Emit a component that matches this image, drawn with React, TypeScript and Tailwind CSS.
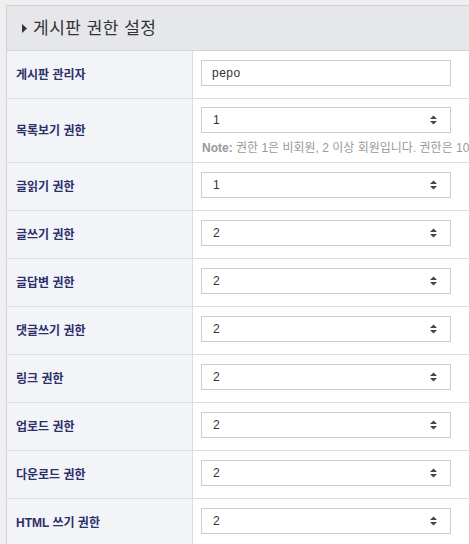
const font = { fontFamily: '"Liberation Sans", "Noto Sans CJK KR", sans-serif' };

type Row = {
  label: string;
  value: string;
  kind: "input" | "select";
  note?: boolean;
};

const rows: Row[] = [
  { label: "게시판 관리자", value: "pepo", kind: "input" },
  { label: "목록보기 권한", value: "1", kind: "select", note: true },
  { label: "글읽기 권한", value: "1", kind: "select" },
  { label: "글쓰기 권한", value: "2", kind: "select" },
  { label: "글답변 권한", value: "2", kind: "select" },
  { label: "댓글쓰기 권한", value: "2", kind: "select" },
  { label: "링크 권한", value: "2", kind: "select" },
  { label: "업로드 권한", value: "2", kind: "select" },
  { label: "다운로드 권한", value: "2", kind: "select" },
  { label: "HTML 쓰기 권한", value: "2", kind: "select" },
];

function UpDown() {
  return (
    <svg width="7" height="10" viewBox="0 0 7 10" className="text-[#444]">
      <path d="M3.5 0.5 L7 4 L0 4 Z" fill="currentColor" />
      <path d="M0 6 L7 6 L3.5 9.5 Z" fill="currentColor" />
    </svg>
  );
}

function Field({ row }: { row: Row }) {
  if (row.kind === "input") {
    return (
      <div className="w-[250px] h-[26px] border border-[#cccccc] bg-white flex items-center pl-[10px] text-[12px] tracking-[0.5px] text-[#333]">
        {row.value}
      </div>
    );
  }
  return (
    <div className="w-[250px] h-[26px] border border-[#cccccc] bg-white flex items-center justify-between pl-[11px] pr-[13px] text-[12px] text-[#333]">
      <span>{row.value}</span>
      <UpDown />
    </div>
  );
}

export default function App() {
  return (
    <div className="w-[469px] h-[544px] overflow-hidden bg-[#efefef] pl-[6px] pt-[5px]" style={font}>
      <div className="w-[800px] border-l border-t border-[#d2d2d2] bg-white">
        <div className="h-[45px] bg-[#e6e7eb] border-b border-[#d6d6d6] flex items-center pl-[15px] gap-[6px]">
          <svg width="5" height="9" viewBox="0 0 5 9">
            <path d="M0 0 L5 4.5 L0 9 Z" fill="#333" />
          </svg>
          <span className="text-[17px] text-[#333] leading-none tracking-[0.5px]">게시판 권한 설정</span>
        </div>
        {rows.map((row) => (
          <div
            key={row.label}
            className={`grid grid-cols-[186px_1fr] border-b border-[#dddddd] ${row.note ? "h-[64px]" : "h-[48px]"}`}
          >
            <div className="bg-[#f3f4f7] border-r border-[#dddddd] flex items-center pl-[9px] text-[12px] font-bold text-[#2b2f6b]">
              {row.label}
            </div>
            <div className={`pl-[8px] ${row.note ? "pt-[8px]" : "pt-[9px]"}`}>
              <Field row={row} />
              {row.note && (
                <div className="mt-[9px] pl-[1px] text-[12px] text-[#999] whitespace-nowrap leading-none">
                  <b>Note:</b> 권한 1은 비회원, 2 이상 회원입니다. 권한은 10 이 가장 높습니다.
                </div>
              )}
            </div>
          </div>
        ))}
      </div>
    </div>
  );
}
